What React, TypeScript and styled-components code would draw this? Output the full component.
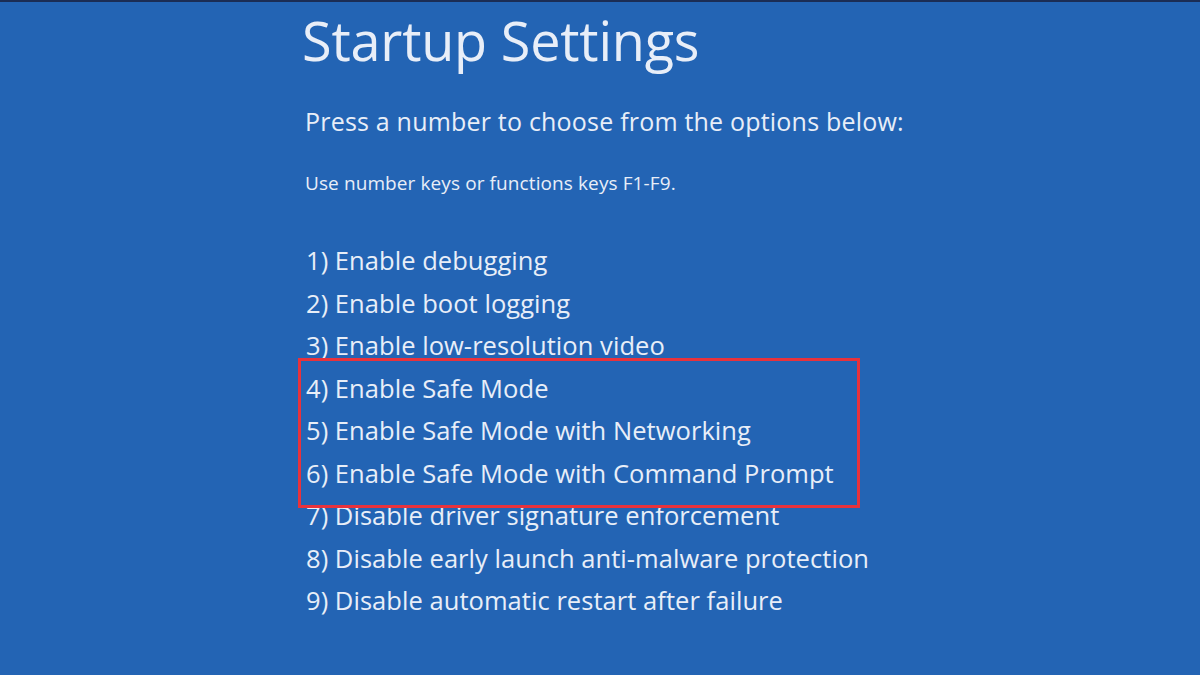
import React from "react";
import styled, { createGlobalStyle } from "styled-components";

const GlobalStyle = createGlobalStyle`
  html, body {
    margin: 0;
    padding: 0;
    background: #2364b4;
  }
  body {
    font-family: "Open Sans", "Noto Sans", sans-serif;
    color: #e8eef8;
  }
`;

const options = [
  "1) Enable debugging",
  "2) Enable boot logging",
  "3) Enable low-resolution video",
  "4) Enable Safe Mode",
  "5) Enable Safe Mode with Networking",
  "6) Enable Safe Mode with Command Prompt",
  "7) Disable driver signature enforcement",
  "8) Disable early launch anti-malware protection",
  "9) Disable automatic restart after failure",
];

export default function App() {
  return (
    <Screen>
      <GlobalStyle />
      <Content>
        <Title>Startup Settings</Title>
        <Prompt>Press a number to choose from the options below:</Prompt>
        <Hint>Use number keys or functions keys F1-F9.</Hint>
        <OptionList>
          {options.slice(0, 3).map((o) => (
            <Option key={o}>{o}</Option>
          ))}
          <Highlight>
            {options.slice(3, 6).map((o) => (
              <Option key={o}>{o}</Option>
            ))}
          </Highlight>
          {options.slice(6).map((o) => (
            <Option key={o}>{o}</Option>
          ))}
        </OptionList>
      </Content>
    </Screen>
  );
}

const Screen = styled.div`
  width: 1200px;
  height: 675px;
  overflow: hidden;
  background: #2364b4;
  border-top: 2px solid #1b2d55;
  box-sizing: border-box;
`;

const Content = styled.div`
  display: flex;
  flex-direction: column;
  padding-left: 302px;
`;

const Title = styled.h1`
  margin: 11px 0 0;
  font-size: 54px;
  font-weight: 400;
  line-height: 54px;
  letter-spacing: -0.2px;
`;

const Prompt = styled.p`
  margin: 39px 0 0 3px;
  font-size: 25px;
  line-height: 30px;
  letter-spacing: 0.2px;
`;

const Hint = styled.p`
  margin: 35px 0 0 3px;
  font-size: 19px;
  line-height: 24px;
  letter-spacing: 0.1px;
`;

const OptionList = styled.div`
  display: flex;
  flex-direction: column;
  margin-top: 44px;
  margin-left: 4px;
`;

const Option = styled.div`
  height: 42.5px;
  font-size: 25.5px;
  line-height: 42.5px;
  letter-spacing: 0.05px;
  white-space: nowrap;
`;

const Highlight = styled.div`
  position: relative;

  &::after {
    content: "";
    position: absolute;
    top: -9px;
    left: -8px;
    width: 562px;
    bottom: -14px;
    border: 3px solid #e8323c;
    box-sizing: border-box;
    pointer-events: none;
  }
`;
